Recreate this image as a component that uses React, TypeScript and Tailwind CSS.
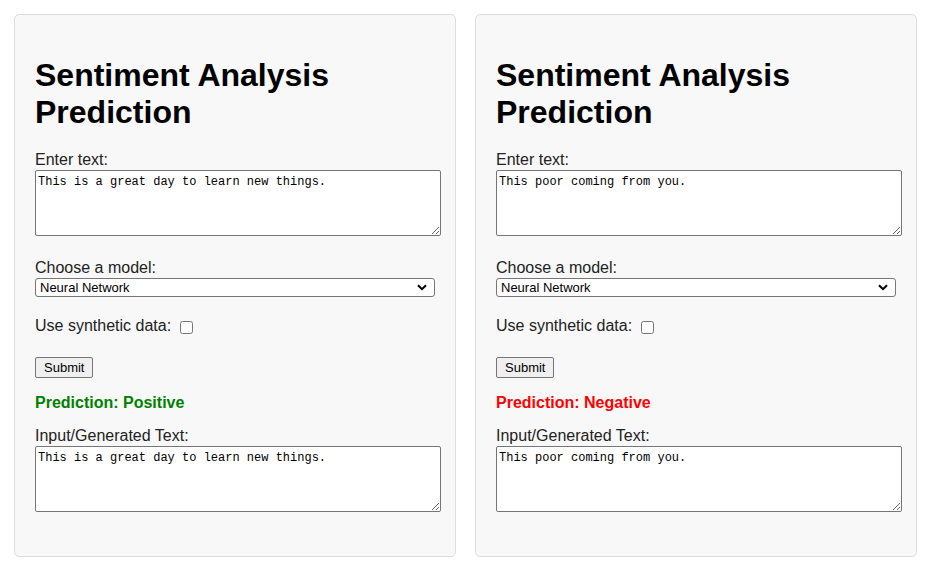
type PanelProps = {
  text: string;
  prediction: string;
  positive: boolean;
};

function Chevron() {
  return (
    <svg width="10" height="7" viewBox="0 0 10 7" className="pointer-events-none absolute right-[8px] top-[6px]">
      <path d="M1 1.2 L5 5.2 L9 1.2" fill="none" stroke="#000" strokeWidth="2" />
    </svg>
  );
}

function Panel({ text, prediction, positive }: PanelProps) {
  return (
    <div className="w-[442px] shrink-0 rounded-[5px] border border-[#dddddd] bg-[#f8f8f8] px-[20px] pt-[42px] pb-[44px]">
      <h1 className="mb-[20px] text-[32px] leading-[37px] font-bold text-black">
        Sentiment Analysis Prediction
      </h1>

      <label className="block text-[16px] leading-[18px] text-[#222]">Enter text:</label>
      <textarea
        defaultValue={text}
        className="mt-[1px] block h-[66px] w-[406px] rounded-[2px] border border-[#767676] bg-white px-[2px] pt-[4px] pb-[2px] font-['Liberation_Mono',monospace] text-[12px] leading-[15px] text-black"
      />

      <label className="mt-[23px] block text-[16px] leading-[18px] text-[#222]">Choose a model:</label>
      <div className="relative mt-[1px] w-[400px]">
        <select className="block h-[19px] w-[400px] appearance-none rounded-[3px] border border-[#767676] bg-white pl-[4px] text-[13px] leading-[17px] text-black">
          <option>Neural Network</option>
        </select>
        <Chevron />
      </div>

      <div className="mt-[20px] flex h-[18px] items-center text-[16px] leading-[18px] text-[#222]">
        <span>Use synthetic data:</span>
        <input type="checkbox" className="ml-[9px] mt-[2px] h-[13px] w-[13px]" />
      </div>

      <button className="mt-[22px] block h-[21px] rounded-[2px] border border-[#767676] bg-[#efefef] px-[8px] text-[13px] leading-[17px] text-black">
        Submit
      </button>

      <p
        className={
          positive
            ? "mt-[16px] text-[16px] leading-[18px] font-bold text-[#008000]"
            : "mt-[16px] text-[16px] leading-[18px] font-bold text-[#ff0000]"
        }
      >
        Prediction: {prediction}
      </p>

      <label className="mt-[15px] block text-[16px] leading-[18px] text-[#222]">Input/Generated Text:</label>
      <textarea
        defaultValue={text}
        className="mt-[1px] block h-[66px] w-[406px] rounded-[2px] border border-[#767676] bg-white px-[2px] pt-[4px] pb-[2px] font-['Liberation_Mono',monospace] text-[12px] leading-[15px] text-black"
      />
    </div>
  );
}

export default function App() {
  return (
    <div className="flex h-[570px] w-[932px] items-start gap-[19px] bg-white p-[14px] font-['Liberation_Sans',Arial,sans-serif]">
      <Panel text="This is a great day to learn new things." prediction="Positive" positive />
      <Panel text="This poor coming from you." prediction="Negative" positive={false} />
    </div>
  );
}
